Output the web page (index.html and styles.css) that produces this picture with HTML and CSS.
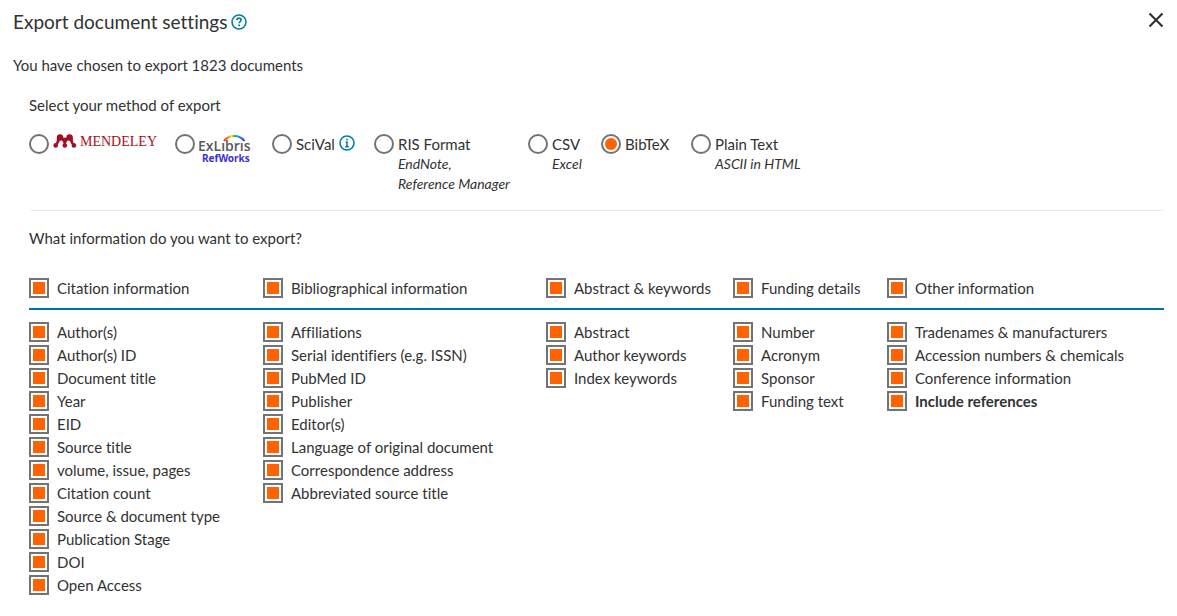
FILE: index.html
```html
<!DOCTYPE html>
<html lang="en">
<head>
<meta charset="utf-8">
<title>Export document settings</title>
<link rel="stylesheet" href="styles.css">
</head>
<body>
<main class="dialog">
  <header class="dialog-header">
    <h1 class="title">Export document settings</h1>
    <button class="icon-button" type="button" aria-label="Help">
      <svg width="16" height="16" viewBox="0 0 16 16" fill="none" stroke="#007fa3"><circle cx="8" cy="8" r="7" stroke-width="1.6"/><path d="M5.9 6.1C6 4.8 6.9 4.2 8 4.2c1.200 0 2.100.7 2.100 1.800 0 1.500-2 1.600-2 3.300" stroke-width="1.700"/><path d="M8.100 10.400v1.800" stroke-width="1.800"/></svg>
    </button>
    <button class="icon-button close" type="button" aria-label="Close">
      <svg width="16" height="16" viewBox="0 0 16 16" fill="none" stroke="#2e2e2e" stroke-width="2"><path d="M1.500 1.500l13 13M14.500 1.500l-13 13"/></svg>
    </button>
  </header>
  <p class="summary">You have chosen to export 1823 documents</p>

  <section class="panel">
    <h2 class="question">Select your method of export</h2>
    <div class="methods">
      <label class="method"><input class="radio" type="radio" name="method" aria-label="Mendeley">
        <span class="mendeley">
          <svg width="24" height="14" viewBox="0 0 24 14" fill="#a50e22"><circle cx="7" cy="3.400" r="3.200"/><circle cx="16.600" cy="3.400" r="3.200"/><circle cx="11.800" cy="5.600" r="2.200"/><circle cx="2.700" cy="11.400" r="2.300"/><circle cx="11.800" cy="11.400" r="2.300"/><circle cx="20.900" cy="11.400" r="2.300"/><path d="M4 3.400h6l1.800 1.200 1.800-1.200h6c.4 2.200 0 4 1.300 6l-1.800 1.500c-2-2-1.600-4.600-3.600-4.600-1.700 0-1.600 2.600-3.700 4.100-2.100-1.500-2-4.100-3.700-4.100-2 0-1.600 2.600-3.600 4.600l-1.800-1.500C4 7.400 3.600 5.600 4 3.400z"/></svg>
          <span>MENDELEY</span>
        </span>
      </label>
      <label class="method"><input class="radio" type="radio" name="method" aria-label="ExLibris RefWorks">
        <svg class="refworks" width="56" height="32" viewBox="0 0 56 32">
          <defs><linearGradient id="rainbow" x1="0" x2="1" y1="0" y2="0"><stop offset="0" stop-color="#f22"/><stop offset=".2" stop-color="#ff7a00"/><stop offset=".36" stop-color="#ffe600"/><stop offset=".52" stop-color="#20b83a"/><stop offset=".7" stop-color="#2196ef"/><stop offset="1" stop-color="#3232d8"/></linearGradient></defs>
          <path d="M26 7C31 .2 41.500.2 46.500 7" fill="none" stroke="url(#rainbow)" stroke-width="2"/>
          <text class="exlibris-text" x="0" y="17">ExLıbrıs</text>
          <text class="refworks-text" x="4" y="28">RefWorks</text>
        </svg>
      </label>
      <div class="method"><input class="radio" type="radio" name="method" id="scival"><label for="scival">SciVal</label>
        <button class="icon-button" type="button" aria-label="About SciVal">
          <svg width="16" height="16" viewBox="0 0 16 16" fill="none" stroke="#007fa3"><circle cx="8" cy="8" r="7" stroke-width="1.600"/><path d="M8 3.800v1.800M6.600 7.300H8v4M6.200 11.700h3.700" stroke-width="1.600"/></svg>
        </button>
      </div>
      <label class="method"><input class="radio" type="radio" name="method"><span>RIS Format<em class="hint">EndNote,<br>Reference Manager</em></span></label>
      <label class="method"><input class="radio" type="radio" name="method"><span>CSV<em class="hint">Excel</em></span></label>
      <label class="method"><input class="radio" type="radio" name="method" checked><span>BibTeX</span></label>
      <label class="method"><input class="radio" type="radio" name="method"><span>Plain Text<em class="hint">ASCII in HTML</em></span></label>
    </div>
  </section>

  <section class="panel fields">
    <h2 class="question">What information do you want to export?</h2>
    <div class="columns heads">
      <label class="option"><input class="check" type="checkbox" checked>Citation information</label>
      <label class="option"><input class="check" type="checkbox" checked>Bibliographical information</label>
      <label class="option"><input class="check" type="checkbox" checked>Abstract &amp; keywords</label>
      <label class="option"><input class="check" type="checkbox" checked>Funding details</label>
      <label class="option"><input class="check" type="checkbox" checked>Other information</label>
    </div>
    <div class="columns lists">
      <div class="list">
        <label class="option"><input class="check" type="checkbox" checked>Author(s)</label>
        <label class="option"><input class="check" type="checkbox" checked>Author(s) ID</label>
        <label class="option"><input class="check" type="checkbox" checked>Document title</label>
        <label class="option"><input class="check" type="checkbox" checked>Year</label>
        <label class="option"><input class="check" type="checkbox" checked>EID</label>
        <label class="option"><input class="check" type="checkbox" checked>Source title</label>
        <label class="option"><input class="check" type="checkbox" checked>volume, issue, pages</label>
        <label class="option"><input class="check" type="checkbox" checked>Citation count</label>
        <label class="option"><input class="check" type="checkbox" checked>Source &amp; document type</label>
        <label class="option"><input class="check" type="checkbox" checked>Publication Stage</label>
        <label class="option"><input class="check" type="checkbox" checked>DOI</label>
        <label class="option"><input class="check" type="checkbox" checked>Open Access</label>
      </div>
      <div class="list">
        <label class="option"><input class="check" type="checkbox" checked>Affiliations</label>
        <label class="option"><input class="check" type="checkbox" checked>Serial identifiers (e.g. ISSN)</label>
        <label class="option"><input class="check" type="checkbox" checked>PubMed ID</label>
        <label class="option"><input class="check" type="checkbox" checked>Publisher</label>
        <label class="option"><input class="check" type="checkbox" checked>Editor(s)</label>
        <label class="option"><input class="check" type="checkbox" checked>Language of original document</label>
        <label class="option"><input class="check" type="checkbox" checked>Correspondence address</label>
        <label class="option"><input class="check" type="checkbox" checked>Abbreviated source title</label>
      </div>
      <div class="list">
        <label class="option"><input class="check" type="checkbox" checked>Abstract</label>
        <label class="option"><input class="check" type="checkbox" checked>Author keywords</label>
        <label class="option"><input class="check" type="checkbox" checked>Index keywords</label>
      </div>
      <div class="list">
        <label class="option"><input class="check" type="checkbox" checked>Number</label>
        <label class="option"><input class="check" type="checkbox" checked>Acronym</label>
        <label class="option"><input class="check" type="checkbox" checked>Sponsor</label>
        <label class="option"><input class="check" type="checkbox" checked>Funding text</label>
      </div>
      <div class="list">
        <label class="option"><input class="check" type="checkbox" checked>Tradenames &amp; manufacturers</label>
        <label class="option"><input class="check" type="checkbox" checked>Accession numbers &amp; chemicals</label>
        <label class="option"><input class="check" type="checkbox" checked>Conference information</label>
        <label class="option strong"><input class="check" type="checkbox" checked>Include references</label>
      </div>
    </div>
  </section>
</main>
</body>
</html>
```
FILE: styles.css
```css
* {
  box-sizing: border-box;
}

body {
  margin: 0;
  background: #fff;
  color: #323232;
  font: 15px/20px Lato, "Open Sans", sans-serif;
  font-variant-ligatures: none;
}

.dialog {
  padding: 8px 13px;
}

.dialog-header {
  display: flex;
  align-items: center;
  gap: 4px;
  height: 28px;
}

.title {
  margin: 0;
  font-size: 19px;
  font-weight: 400;
  line-height: 28px;
}

.icon-button {
  display: flex;
  padding: 0;
  border: 0;
  background: none;
  cursor: pointer;
}

.close {
  margin-left: auto;
  align-self: flex-start;
  padding: 4px 0;
}

.summary {
  margin: 19px 0 20px;
}

.panel {
  margin: 0 0 0 16px;
}

.question {
  margin: 0;
  font-size: 15px;
  font-weight: 400;
  line-height: 20px;
}

.methods {
  display: grid;
  grid-template-columns: 146px 97px 102px 154px 73px 90px auto;
  margin: 19px 0 0;
  padding-bottom: 16px;
  border-bottom: 1px solid #e8e8e8;
  border-radius: 4px;
}

.method {
  display: flex;
  align-items: flex-start;
  gap: 4px;
}

.method .icon-button {
  padding-top: 1px;
}

.radio,
.check {
  flex: none;
  appearance: none;
  width: 20px;
  height: 20px;
  margin: 0;
  padding: 2px;
  border: 2px solid #737373;
}

.radio {
  border-radius: 50%;
}

.radio:checked,
.check:checked {
  background: #ff6200 content-box;
}

.hint {
  display: block;
  font-size: 14px;
  line-height: 20px;
}

.mendeley {
  display: flex;
  gap: 3px;
  color: #a50e22;
  font: 14px/16px "Liberation Serif", serif;
}

.refworks {
  margin-left: -1px;
}

.exlibris-text {
  fill: #58595b;
  font: 600 14px "Open Sans", sans-serif;
}

.refworks-text {
  fill: #3a2ed8;
  font: 700 10px "Noto Sans", sans-serif;
}

.fields {
  margin-top: 17px;
}

.columns {
  display: grid;
  grid-template-columns: 234fr 283fr 187fr 154fr 277fr;
}

.heads {
  margin-top: 30px;
  padding-bottom: 10px;
  border-bottom: 2px solid #007398;
}

.lists {
  margin-top: 12px;
}

.list {
  display: flex;
  flex-direction: column;
  gap: 3px;
}

.option {
  display: flex;
  gap: 8px;
  white-space: nowrap;
}

.strong {
  font-weight: 700;
}
```
